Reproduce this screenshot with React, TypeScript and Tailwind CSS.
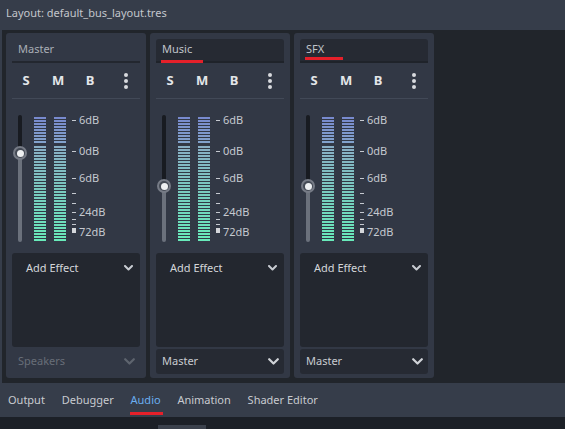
import React from "react";

const BLUE = 9;
const TEAL = 32;

function lerp(a: number[], b: number[], t: number) {
  return `rgb(${a.map((v, i) => Math.round(v + (b[i] - v) * t)).join(",")})`;
}

function Meter() {
  return (
    <div className="flex flex-col w-[12px] mt-[18px] gap-[1px]">
      {Array.from({ length: BLUE }).map((_, i) => (
        <div
          key={"b" + i}
          className="h-[2px] w-full"
          style={{ backgroundColor: lerp([120, 138, 206], [130, 162, 204], i / (BLUE - 1)) }}
        />
      ))}
      <div className="h-[1px]" />
      {Array.from({ length: TEAL }).map((_, i) => (
        <div
          key={"t" + i}
          className="h-[2px] w-full"
          style={{ backgroundColor: lerp([136, 174, 196], [104, 234, 186], i / (TEAL - 1)) }}
        />
      ))}
    </div>
  );
}

function Tick() {
  return <div className="w-[4px] h-[1px] bg-[#c5c9d0]" />;
}

function Label({ children }: { children: React.ReactNode }) {
  return <span className="ml-[3px] relative -top-[1px]">{children}</span>;
}

function Scale() {
  return (
    <div className="flex flex-col ml-[6px] text-[11px] leading-none text-[#c5c9d0]">
      <div className="flex items-center h-[12px] mt-[15px]">
        <Tick />
        <Label>6dB</Label>
      </div>
      <div className="flex items-center h-[12px] mt-[19px]">
        <Tick />
        <Label>0dB</Label>
      </div>
      <div className="flex items-center h-[12px] mt-[15px]">
        <Tick />
        <Label>6dB</Label>
      </div>
      <div className="mt-[9px]">
        <Tick />
      </div>
      <div className="mt-[9px]">
        <Tick />
      </div>
      <div className="flex items-center h-[12px] mt-[2px]">
        <Tick />
        <Label>24dB</Label>
      </div>
      <div className="mt-[1px]">
        <Tick />
      </div>
      <div className="mt-[4px]">
        <Tick />
      </div>
      <div className="flex items-center h-[12px] mt-[1px]">
        <div className="w-[4px] h-[5px] bg-[#d4d6da] self-start mt-[2px]" />
        <Label>72dB</Label>
      </div>
    </div>
  );
}

function Chevron({ big, color }: { big?: boolean; color: string }) {
  if (big) {
    return (
      <svg width="11" height="7" viewBox="0 0 11 7">
        <path d="M1.2 1.2 L5.5 5.5 L9.8 1.2" fill="none" stroke={color} strokeWidth="2.2" strokeLinecap="round" strokeLinejoin="round" />
      </svg>
    );
  }
  return (
    <svg width="9" height="6" viewBox="0 0 9 6">
      <path d="M1 1 L4.5 4.5 L8 1" fill="none" stroke={color} strokeWidth="2" strokeLinecap="round" strokeLinejoin="round" />
    </svg>
  );
}

function Bus({ name, master, knob }: { name: string; master?: boolean; knob: number }) {
  return (
    <div className="w-[140px] h-[345px] shrink-0 bg-[#323845] rounded-[3px] flex flex-col px-[6px] pt-[6px] pb-[4px]">
      {master ? (
        <div className="h-[24px] flex items-center pl-[6px] pb-[2px] border-b-2 border-[#23272f] text-[11px] text-[#a9aeb6]">
          {name}
        </div>
      ) : (
        <div className="relative h-[24px] flex items-center pl-[6px] pb-[2px] bg-[#262a33] rounded-t-[3px] border-b-2 border-[#1f232a] text-[11px] text-[#c0c4ca]">
          {name}
          <div
            className={
              name === "Music"
                ? "absolute left-[5px] bottom-[-2px] w-[42px] h-[3px] bg-[#e5202a]"
                : "absolute left-[5px] bottom-[1px] w-[38px] h-[3px] bg-[#e5202a]"
            }
          />
        </div>
      )}
      <div className="h-[35px] flex items-center pl-[9px] text-[13px] font-bold text-[#e4e6e9] leading-none">
        <div className="w-[10px] flex justify-center">S</div>
        <div className="w-[10px] ml-[22px] flex justify-center">M</div>
        <div className="w-[10px] ml-[22px] flex justify-center">B</div>
        <div className="w-[10px] ml-[26px] flex flex-col items-center gap-[2px]">
          <div className="w-[4px] h-[4px] rounded-full bg-[#d8dade]" />
          <div className="w-[4px] h-[4px] rounded-full bg-[#d8dade]" />
          <div className="w-[4px] h-[4px] rounded-full bg-[#d8dade]" />
        </div>
      </div>
      <div className="h-[1px] bg-[#424957]" />
      <div className="h-[154px] flex items-start">
        <div className="w-[16px] flex justify-center">
          <div className="relative mt-[16px] w-[4px] h-[127px] flex flex-col rounded-full overflow-visible">
            <div className="bg-[#181b21] rounded-t-full" style={{ height: knob }} />
            <div className="flex-1 bg-[#6b717c] rounded-b-full" />
            <div
              className="absolute left-1/2 -translate-x-1/2 w-[14px] h-[14px] rounded-full border-2 border-[#767b86] bg-[#444a55] flex items-center justify-center"
              style={{ top: knob - 7 }}
            >
              <div className="w-[7px] h-[7px] rounded-full bg-[#eef0f2]" />
            </div>
          </div>
        </div>
        <div className="ml-[6px]">
          <Meter />
        </div>
        <div className="ml-[8px]">
          <Meter />
        </div>
        <Scale />
      </div>
      <div className="h-[94px] bg-[#23272f] rounded-[3px]">
        <div className="h-[30px] flex items-center justify-between pl-[14px] pr-[7px] text-[11px] text-[#d4d6da]">
          <span>Add Effect</span>
          <Chevron color="#c8ccd2" />
        </div>
      </div>
      {master ? (
        <div className="mt-[2px] h-[25px] flex items-center justify-between pl-[6px] pr-[5px] text-[11px] text-[#686e78]">
          <span>Speakers</span>
          <Chevron big color="#5e646e" />
        </div>
      ) : (
        <div className="mt-[2px] h-[25px] flex items-center justify-between pl-[6px] pr-[5px] bg-[#262a33] rounded-[3px] text-[11px] text-[#c8cbd0]">
          <span>Master</span>
          <Chevron big color="#d0d3d8" />
        </div>
      )}
    </div>
  );
}

export default function App() {
  return (
    <div className="w-[565px] h-[429px] bg-[#363d4a] flex flex-col overflow-hidden font-['Noto_Sans',sans-serif]">
      <div className="h-[30px] shrink-0 flex items-center px-[6px] pb-[4px] text-[11px] text-[#c3c6cc]">
        Layout: default_bus_layout.tres
      </div>
      <div className="ml-[2px] h-[353px] shrink-0 bg-[#21252b] flex gap-[4px] pl-[4px] pt-[3px]">
        <Bus name="Master" master knob={38} />
        <Bus name="Music" knob={71} />
        <Bus name="SFX" knob={71} />
      </div>
      <div className="h-[34px] shrink-0 flex items-center text-[11px] text-[#c8cbd0]">
        <div className="pl-[8px] pr-[8.4px]">Output</div>
        <div className="px-[8.4px]">Debugger</div>
        <div className="relative px-[8.4px] text-[#6aaef0]">
          Audio
          <div className="absolute left-[8px] top-[20px] w-[33px] h-[3px] bg-[#e5202a]" />
        </div>
        <div className="px-[8.4px]">Animation</div>
        <div className="px-[8.4px]">Shader Editor</div>
      </div>
      <div className="flex-1 bg-[#1c2027] flex items-end">
        <div className="ml-[158px] w-[48px] h-[4px] bg-[#3b414c]" />
      </div>
    </div>
  );
}
